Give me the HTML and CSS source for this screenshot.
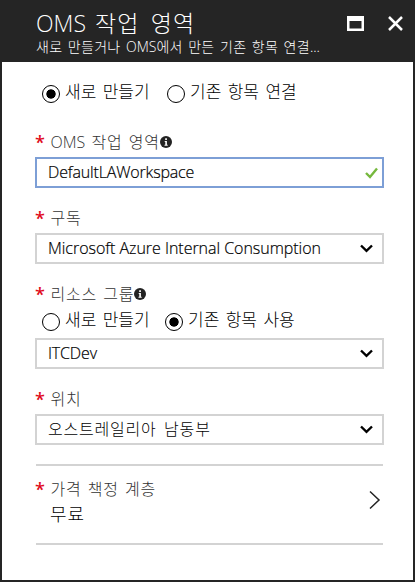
FILE: index.html
```
<!DOCTYPE html>
<html lang="ko">
<head>
<meta charset="utf-8">
<title>OMS 작업 영역</title>
<link rel="stylesheet" href="styles.css">
</head>
<body>
<main class="blade">
  <header class="header">
    <div class="heading">
      <h1><span class="latin">OMS</span> 작업 영역</h1>
      <p>새로 만들거나 <span class="latin">OMS</span>에서 만든 기존 항목 연결<span class="latin">...</span></p>
    </div>
    <svg class="icon-max" width="17" height="15" viewBox="0 0 17 15"><path fill="#fff" fill-rule="evenodd" d="M0 0h17v15H0zM2.5 5v7.5h12V5z"/></svg>
    <svg class="icon-close" width="15" height="15" viewBox="0 0 15 15"><path d="M1 1l13 13M14 1L1 14" stroke="#fff" stroke-width="2.5"/></svg>
  </header>
  <form class="form">
    <div class="radios radios-top">
      <span class="radio on"></span><span class="radio-text">새로 만들기</span>
      <span class="radio second"></span><span class="radio-text">기존 항목 연결</span>
    </div>
    <div class="label"><i class="star">*</i><span><span class="latin">OMS</span> 작업 영역</span><svg class="info" width="12" height="12" viewBox="0 0 12 12"><circle cx="6" cy="6" r="6" fill="#222"/><path d="M4.7 5h2.2v3.7h.8v1H4.5v-1h.8V6h-.6zM5.2 2.3h1.7V4H5.2z" fill="#fff"/></svg></div>
    <div class="field active"><span class="latin tight">DefaultLAWorkspace</span><svg class="check" width="13" height="12" viewBox="0 0 13 12"><path d="M1 6l4 4 7-8.5" fill="none" stroke="#76b83e" stroke-width="2.4"/></svg></div>
    <div class="label spaced"><i class="star">*</i><span>구독</span></div>
    <div class="field"><span class="latin">Microsoft Azure Internal Consumption</span><svg class="arrow" width="13" height="9" viewBox="0 0 13 9"><path d="M1 1.5l5.5 5.3L12 1.5" fill="none" stroke="#000" stroke-width="2.4"/></svg></div>
    <div class="label spaced short"><i class="star">*</i><span>리소스 그룹</span><svg class="info" width="12" height="12" viewBox="0 0 12 12"><circle cx="6" cy="6" r="6" fill="#222"/><path d="M4.7 5h2.2v3.7h.8v1H4.5v-1h.8V6h-.6zM5.2 2.3h1.7V4H5.2z" fill="#fff"/></svg></div>
    <div class="radios radios-group">
      <span class="radio"></span><span class="radio-text">새로 만들기</span>
      <span class="radio on second"></span><span class="radio-text">기존 항목 사용</span>
    </div>
    <div class="field"><span class="latin tight">ITCDev</span><svg class="arrow" width="13" height="9" viewBox="0 0 13 9"><path d="M1 1.5l5.5 5.3L12 1.5" fill="none" stroke="#000" stroke-width="2.4"/></svg></div>
    <div class="label spaced"><i class="star">*</i><span>위치</span></div>
    <div class="field"><span>오스트레일리아 남동부</span><svg class="arrow" width="13" height="9" viewBox="0 0 13 9"><path d="M1 1.5l5.5 5.3L12 1.5" fill="none" stroke="#000" stroke-width="2.4"/></svg></div>
    <section class="pricing">
      <div class="pricing-text">
        <div class="label"><i class="star">*</i><span>가격 책정 계층</span></div>
        <div class="tier">무료</div>
      </div>
      <svg class="next" width="12" height="20" viewBox="0 0 12 20"><path d="M1 1.5l9 8.5-9 8.5" fill="none" stroke="#222" stroke-width="1.5"/></svg>
    </section>
  </form>
</main>
</body>
</html>
```

FILE: styles.css
```
* { box-sizing: border-box; }
body {
  margin: 0;
  font-family: "Open Sans", "Noto Sans CJK KR", sans-serif;
  font-weight: 300;
  color: #000;
}
.blade {
  width: 415px;
  height: 582px;
  border: solid #252525;
  border-width: 0 2px 2px;
  background: #fff;
}
svg { display: block; flex: none; }
span { white-space: nowrap; }
.header {
  height: 62px;
  padding: 10px 9px 0 34px;
  background: #252525;
  color: #fff;
  display: flex;
}
.heading { width: 311px; white-space: nowrap; }
h1, p { margin: 0; font-weight: 300; }
h1 { height: 28px; line-height: 27px; font-size: 23px; letter-spacing: 1.1px; word-spacing: 4px; }
h1 .latin { margin-right: -2px; }
p { height: 18px; line-height: 18px; font-size: 14px; letter-spacing: 0.3px; word-spacing: 1.5px; }
.icon-max { margin: 6px 0 0 0; }
.icon-close { margin: 6px 0 0 24px; }
.form { padding: 0 29px 0 33px; }
.radios { display: flex; padding-left: 7px; font-size: 17px; }
.radios-top { height: 66px; padding-top: 20px; }
.radios-group { height: 33px; padding-top: 5px; }
.radio {
  width: 18px;
  height: 18px;
  margin-top: 3px;
  border: 1px solid #000;
  border-radius: 50%;
  flex: none;
}
.on { background: radial-gradient(circle, #000 4.3px, transparent 5px); }
.radio-text { line-height: 20px; margin-left: 5px; width: 85px; word-spacing: 2px; }
.second { margin-left: 17px; }
.radios-group .second { margin-left: 15px; }
.label {
  height: 29px;
  line-height: 28px;
  display: flex;
  color: #333;
  font-size: 16px;
  letter-spacing: 0.8px;
  word-spacing: 1.3px;
}
.spaced { height: 45px; padding-top: 16px; }
.short { height: 41px; }
.star {
  width: 15.5px;
  font: 600 18px/29px "Open Sans", sans-serif;
  color: #e00b1c;
}
.info { margin-top: 8px; }
.field {
  height: 31px;
  border: 2px solid #d3d3d3;
  display: flex;
  align-items: center;
  justify-content: space-between;
  padding: 0 9px 0 11px;
  font-size: 16px;
  line-height: 27px;
  letter-spacing: 0.8px;
  word-spacing: 2.5px;
}
.active { border-color: #7d9fd6; padding-right: 4px; }
.latin { letter-spacing: 0; word-spacing: 0; }
.field .latin { -webkit-text-stroke: 0.2px currentColor; letter-spacing: -0.03px; }
.field .tight { letter-spacing: -0.16px; }
.pricing {
  height: 81px;
  margin: 19px 1px 0;
  border: solid #d3d3d3;
  border-width: 2px 0;
  display: flex;
  justify-content: space-between;
}
.pricing .label { height: 35px; padding-top: 9px; margin-left: -1px; }
.tier { padding-left: 14px; font-size: 18px; line-height: 26px; letter-spacing: 1px; }
.next { margin: 24px 2px 0 0; }
```
